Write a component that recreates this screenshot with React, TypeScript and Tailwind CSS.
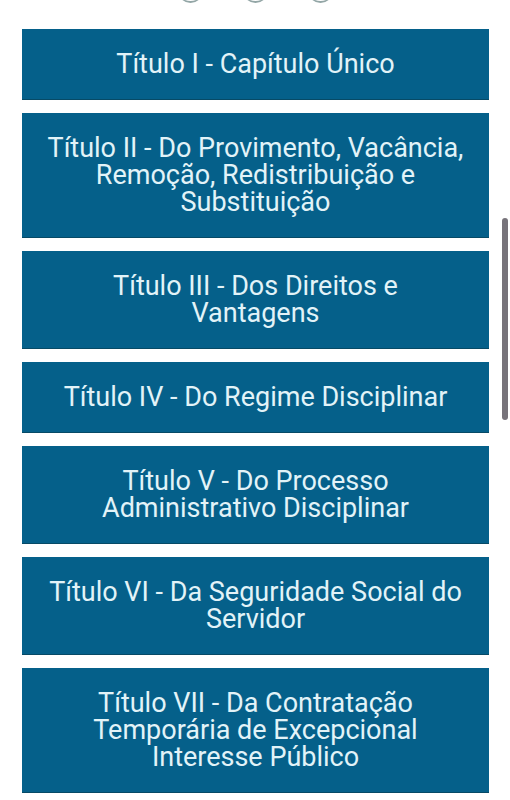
import React from "react";

const items: string[][] = [
  ["Título I - Capítulo Único"],
  ["Título II - Do Provimento, Vacância,", "Remoção, Redistribuição e", "Substituição"],
  ["Título III - Dos Direitos e", "Vantagens"],
  ["Título IV - Do Regime Disciplinar"],
  ["Título V - Do Processo", "Administrativo Disciplinar"],
  ["Título VI - Da Seguridade Social do", "Servidor"],
  ["Título VII - Da Contratação", "Temporária de Excepcional", "Interesse Público"],
];

export default function App() {
  return (
    <div className="relative h-[800px] w-[510px] overflow-hidden bg-white" style={{ fontFamily: "Roboto, 'Noto Sans', sans-serif" }}>
      <div className="absolute left-0 top-0 flex w-full justify-center gap-[40px]">
        {[0, 1, 2].map((i) => (
          <div key={i} className="mt-[-22px] h-[25px] w-[25px] rounded-full border-b-[2px] border-[#93a6a6] bg-white" />
        ))}
      </div>
      <div className="flex flex-col gap-[13px] pl-[22px] pr-[21px] pt-[29px]">
        {items.map((lines, i) => (
          <div
            key={i}
            className="flex flex-col items-center justify-center border-b border-[#074a66] bg-[#05608a] pb-[21px] pt-[22px] text-center text-[27px] leading-[27px] text-[#e2f3f8]"
          >
            {lines.map((l, j) => (
              <span key={j} className="whitespace-nowrap">{l}</span>
            ))}
          </div>
        ))}
      </div>
      <div className="absolute right-[2px] top-[218px] h-[202px] w-[6px] rounded-[3px] bg-[#77737a]" />
    </div>
  );
}
